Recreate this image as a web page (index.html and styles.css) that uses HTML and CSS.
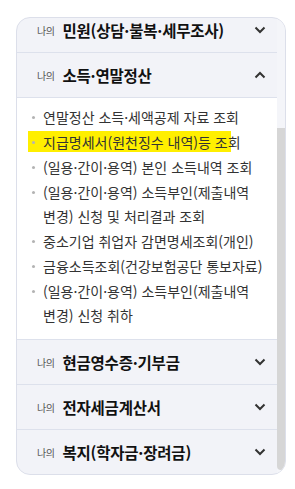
FILE: index.html
```html
<!DOCTYPE html>
<html lang="ko">
<head>
    <meta charset="UTF-8">
    <meta name="viewport" content="width=device-width, initial-scale=1.0">
    <title>나의 메뉴</title>
    <link rel="stylesheet" href="styles.css">
</head>
<body>
    <div class="card">
        <div class="menu">
            <div class="menu-inner">
                <div class="row">
                    <span class="label">나의</span>
                    <span class="title">민원(상담·불복·세무조사)</span>
                    <svg class="chev" width="12" height="8" viewBox="0 0 12 8"><path d="M1.5 1.5 L6 6 L10.5 1.5" /></svg>
                </div>
                <div class="row">
                    <span class="label">나의</span>
                    <span class="title">소득·연말정산</span>
                    <svg class="chev" width="12" height="8" viewBox="0 0 12 8"><path d="M1.5 6.5 L6 2 L10.5 6.5" /></svg>
                </div>
                <ul class="sub-list">
                    <li>연말정산 소득·세액공제 자료 조회</li>
                    <li class="hl">지급명세서(원천징수 내역)등 조회</li>
                    <li>(일용·간이·용역) 본인 소득내역 조회</li>
                    <li>(일용·간이·용역) 소득부인(제출내역 변경) 신청 및 처리결과 조회</li>
                    <li>중소기업 취업자 감면명세조회(개인)</li>
                    <li>금융소득조회(건강보험공단 통보자료)</li>
                    <li>(일용·간이·용역) 소득부인(제출내역 변경) 신청 취하</li>
                </ul>
                <div class="row">
                    <span class="label">나의</span>
                    <span class="title">현금영수증·기부금</span>
                    <svg class="chev" width="12" height="8" viewBox="0 0 12 8"><path d="M1.5 1.5 L6 6 L10.5 1.5" /></svg>
                </div>
                <div class="row">
                    <span class="label">나의</span>
                    <span class="title">전자세금계산서</span>
                    <svg class="chev" width="12" height="8" viewBox="0 0 12 8"><path d="M1.5 1.5 L6 6 L10.5 1.5" /></svg>
                </div>
                <div class="row">
                    <span class="label">나의</span>
                    <span class="title">복지(학자금·장려금)</span>
                    <svg class="chev" width="12" height="8" viewBox="0 0 12 8"><path d="M1.5 1.5 L6 6 L10.5 1.5" /></svg>
                </div>
            </div>
        </div>
        <div class="scrollbar">
            <div class="thumb"></div>
        </div>
    </div>
</body>
</html>
```

FILE: styles.css
```css
body {
    font-family: "Noto Sans CJK KR", "Noto Sans", sans-serif;
    background-color: #fff;
    margin: 0;
    padding: 17px 9px 0 16px;
}
.card {
    display: flex;
    height: 458px;
    box-sizing: border-box;
    border: 1px solid #dcdfea;
    border-radius: 14px;
    background: #f2f3f8;
    overflow: hidden;
}
.menu {
    flex: 1;
    overflow: hidden;
}
.menu-inner {
    margin-top: -10px;
}
.row {
    display: flex;
    align-items: center;
    height: 45px;
    box-sizing: border-box;
    padding: 0 11px 0 20px;
    border-bottom: 1px solid #dde1ec;
}
.label {
    font-size: 10px;
    color: #555;
    letter-spacing: -0.5px;
    margin-right: 8px;
}
.title {
    font-size: 15.5px;
    font-weight: bold;
    color: #111;
    letter-spacing: -0.2px;
}
.chev {
    margin-left: auto;
}
.chev path {
    fill: none;
    stroke: #333;
    stroke-width: 2;
}
.sub-list {
    list-style: none;
    margin: 0;
    padding: 7px 10px 11px 0;
    background: #fff;
    border-bottom: 1px solid #dde1ec;
}
.sub-list li {
    position: relative;
    padding-left: 26px;
    font-size: 14px;
    line-height: 24px;
    color: #333;
    margin-bottom: 1px;
    word-break: keep-all;
}
.sub-list li::before {
    content: "";
    position: absolute;
    left: 15px;
    top: 11px;
    width: 3px;
    height: 3px;
    border-radius: 50%;
    background: #b3b3b3;
}
.sub-list li.hl {
    background: linear-gradient(#ffef00, #ffef00) no-repeat 11px 1px / 203px 21px;
}
.scrollbar {
    width: 8px;
    background: #f4f5f9;
    padding-top: 110px;
}
.thumb {
    height: 342px;
    background: #d6d6d6;
    border-radius: 0 0 4px 4px;
}
```
